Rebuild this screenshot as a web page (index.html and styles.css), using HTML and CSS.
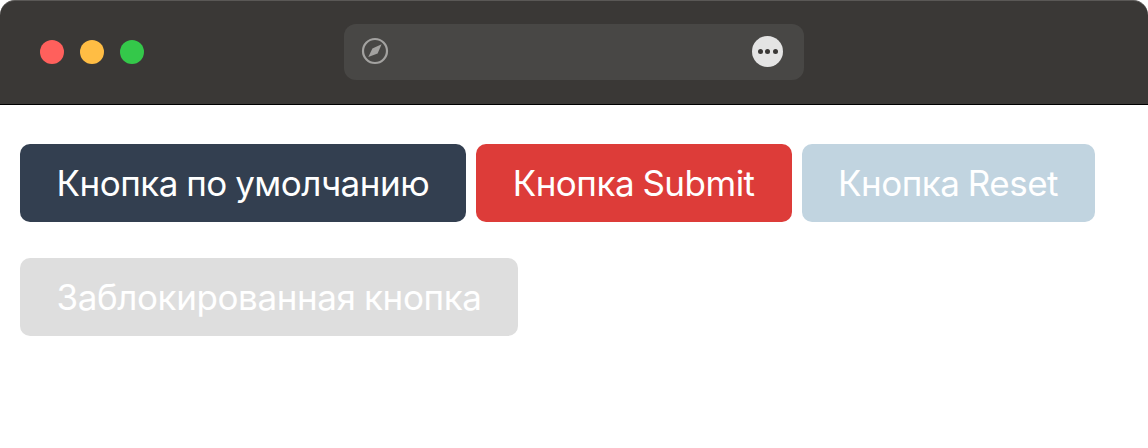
FILE: index.html
```html
<!DOCTYPE html>
<html lang="ru">
<head>
<meta charset="utf-8">
<title>Кнопки</title>
<link rel="stylesheet" href="styles.css">
</head>
<body>
<div class="window">
  <header class="titlebar">
    <div class="lights">
      <span class="light red"></span>
      <span class="light yellow"></span>
      <span class="light green"></span>
    </div>
    <div class="address">
      <svg class="compass" width="28" height="28" viewBox="0 0 28 28" aria-hidden="true">
        <circle cx="14" cy="14" r="12" fill="none" stroke="#a3a2a0" stroke-width="2.2"/>
        <path d="M20.6 7.3 L16.6 16.4 L7.3 19.9 L11.4 11.6 Z" fill="#a3a2a0"/>
      </svg>
      <span class="more"><i></i><i></i><i></i></span>
    </div>
  </header>
  <main class="content">
    <button class="btn default">Кнопка по умолчанию</button>
    <button class="btn submit">Кнопка Submit</button>
    <button class="btn reset">Кнопка Reset</button>
    <button class="btn disabled" disabled>Заблокированная кнопка</button>
  </main>
</div>
</body>
</html>
```
FILE: styles.css
```css
* { box-sizing: border-box; }
html, body { margin: 0; height: 100%; background: #fff; }
.window { width: 1148px; height: 448px; overflow: hidden; background: #fff; }
.titlebar {
  height: 105px;
  display: flex;
  align-items: flex-start;
  background: #3a3836;
  border-top: 1px solid #5a5856;
  border-bottom: 1px solid #000;
  border-radius: 15px 15px 0 0;
}
.lights { display: flex; gap: 16px; margin: 39px 0 0 40px; }
.light { width: 24px; height: 24px; border-radius: 50%; }
.red { background: #ff605c; }
.yellow { background: #ffbd44; }
.green { background: #34c84a; }
.address {
  width: 460px;
  height: 56px;
  margin: 23px 0 0 200px;
  padding: 0 21px 2px 17px;
  display: flex;
  align-items: center;
  justify-content: space-between;
  border-radius: 12px;
  background: #484745;
}
.compass { display: block; }
.more {
  width: 31px;
  height: 31px;
  margin-bottom: -1px;
  border-radius: 50%;
  background: #e4e4e4;
  display: flex;
  align-items: center;
  justify-content: center;
  gap: 2.5px;
}
.more i { width: 5px; height: 5px; border-radius: 50%; background: #3a3836; }
.content {
  display: flex;
  flex-wrap: wrap;
  align-items: flex-start;
  gap: 36px 10px;
  padding: 39px 20px 0;
}
.btn {
  height: 78px;
  padding: 0 37px;
  border: 0;
  border-radius: 10px;
  color: #fff;
  font: 400 35px/78px Inter, "Liberation Sans", sans-serif;
  letter-spacing: -0.5px;
  word-spacing: -1px;
  white-space: nowrap;
}
.default { background: #333f50; padding: 0 36.5px; }
.submit { background: #dd3c39; }
.reset { background: #c1d4e0; padding: 0 36.5px; }
.disabled { background: #dedede; letter-spacing: -0.4px; padding: 0 36.5px; }
```
